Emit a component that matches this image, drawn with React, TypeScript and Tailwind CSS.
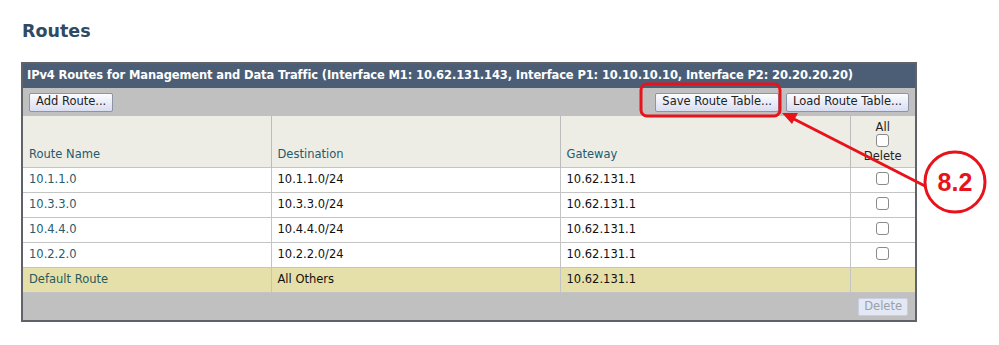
const ROUTES = [
  { name: "10.1.1.0", dest: "10.1.1.0/24", gw: "10.62.131.1" },
  { name: "10.3.3.0", dest: "10.3.3.0/24", gw: "10.62.131.1" },
  { name: "10.4.4.0", dest: "10.4.4.0/24", gw: "10.62.131.1" },
  { name: "10.2.2.0", dest: "10.2.2.0/24", gw: "10.62.131.1" },
];

const btn =
  "h-[19px] rounded-[2px] border border-[#8d94a8] bg-gradient-to-b from-[#fbfcff] to-[#d9def0] px-[6px] text-[11.5px] leading-none text-[#222]";

function Box() {
  return <span className="inline-block h-[13px] w-[13px] rounded-[3px] border border-[#8a8a8a] bg-white" />;
}

export default function App() {
  return (
    <div className="relative h-[345px] w-[999px] bg-white font-['DejaVu_Sans',Verdana,sans-serif]">
      <div className="pl-[21px] pt-[20px]">
        <h1 className="pl-px text-[17.5px] font-bold leading-[22px] text-[#2f4a63]">Routes</h1>

        <div className="mt-[20px] w-[896px] border-2 border-[#5f6266]">
          <div className="flex h-[24px] items-center whitespace-nowrap bg-[#4b5e76] px-[4px] text-[11.5px] font-bold tracking-[-0.12px] text-white">
            IPv4 Routes for Management and Data Traffic (Interface M1: 10.62.131.143, Interface P1: 10.10.10.10, Interface P2: 20.20.20.20)
          </div>
          <div className="flex h-[28px] items-center justify-between bg-[#c0c0c0] px-[6px]">
            <button className={btn}>Add Route...</button>
            <div className="flex gap-[7px]">
              <button className={btn}>Save Route Table...</button>
              <button className={btn}>Load Route Table...</button>
            </div>
          </div>

          <table className="w-full border-collapse text-[11.5px]">
            <colgroup>
              <col className="w-[248px]" />
              <col className="w-[289px]" />
              <col className="w-[290px]" />
              <col />
            </colgroup>
            <thead>
              <tr className="h-[51px] bg-[#ededE5] text-left align-bottom font-normal text-[#255a6e]">
                <th className="border-r border-[#bcbcbc] px-[6px] pb-[3px] font-normal">Route Name</th>
                <th className="border-r border-[#bcbcbc] px-[6px] pb-[3px] font-normal">Destination</th>
                <th className="border-r border-[#bcbcbc] px-[6px] pb-[3px] font-normal">Gateway</th>
                <th className="pb-[4px] text-center font-normal leading-[13px] text-[#222]">
                  <div>All</div>
                  <Box />
                  <div>Delete</div>
                </th>
              </tr>
            </thead>
            <tbody>
              {ROUTES.map((r) => (
                <tr key={r.name} className="h-[25px] border-t border-[#c4c4c4] bg-white text-[#111]">
                  <td className="border-r border-[#c4c4c4] px-[6px] text-[#275b70]">{r.name}</td>
                  <td className="border-r border-[#c4c4c4] px-[6px]">{r.dest}</td>
                  <td className="border-r border-[#c4c4c4] px-[6px]">{r.gw}</td>
                  <td className="text-center leading-none"><Box /></td>
                </tr>
              ))}
              <tr className="h-[25px] border-t border-[#c4c4c4] bg-[#e5e0a9] text-[#111]">
                <td className="border-r border-[#c4c4c4] px-[6px] text-[#275b5c]">Default Route</td>
                <td className="border-r border-[#c4c4c4] px-[6px]">All Others</td>
                <td className="border-r border-[#c4c4c4] px-[6px]">10.62.131.1</td>
                <td />
              </tr>
            </tbody>
          </table>

          <div className="flex h-[28px] items-center justify-end border-t border-[#c4c4c4] bg-[#c0c0c0] px-[7px]">
            <button className="h-[18px] rounded-[2px] border border-[#c9cfe0] bg-[#e3e8f4] px-[5px] text-[11.5px] leading-none text-[#9aa0ab]">
              Delete
            </button>
          </div>
        </div>
      </div>

      <svg className="pointer-events-none absolute left-0 top-0" width="999" height="345">
        <rect x="641" y="84" width="139" height="32" rx="6" fill="none" stroke="#e8121b" strokeWidth="3" />
        <line x1="925" y1="186" x2="790" y2="117" stroke="#e8121b" strokeWidth="3" />
        <polygon points="782,113 798,113 792,124" fill="#e8121b" />
        <circle cx="955" cy="182" r="30" fill="white" stroke="#e8121b" strokeWidth="3" />
        <text x="955" y="191" textAnchor="middle" fontFamily="Liberation Sans, Arial, sans-serif" fontWeight="700" fontSize="25" fill="#e8121b">
          8.2
        </text>
      </svg>
    </div>
  );
}
